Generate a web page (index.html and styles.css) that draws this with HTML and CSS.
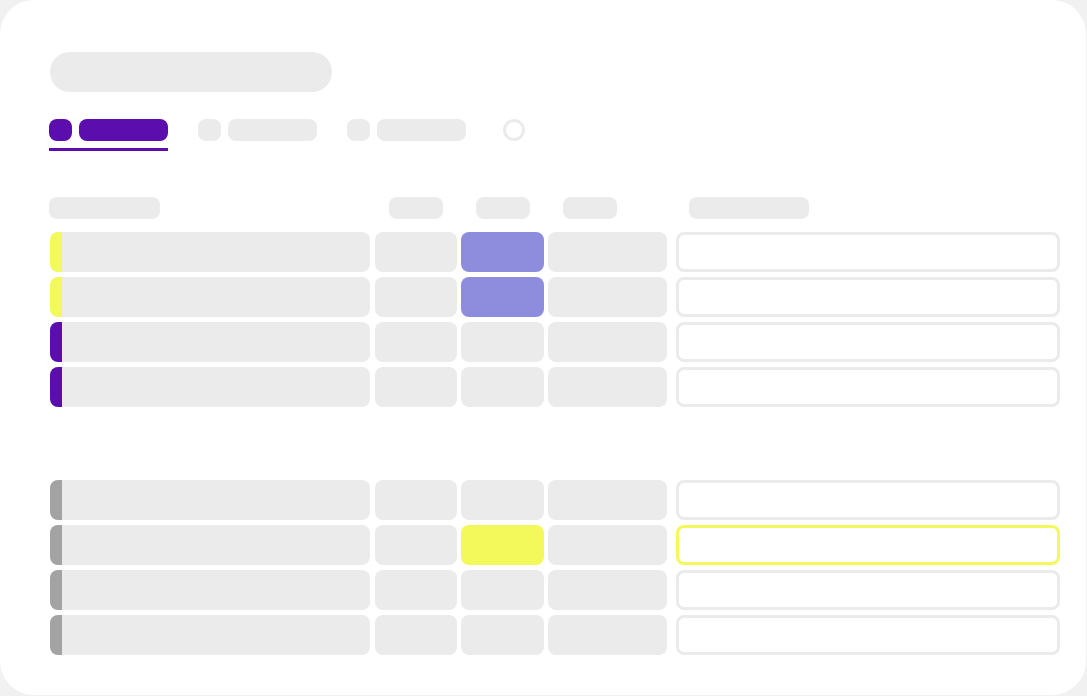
FILE: index.html
```html
<!DOCTYPE html>
<html lang="en">
<head>
<meta charset="utf-8">
<title>Skeleton table</title>
<link rel="stylesheet" href="styles.css">
</head>
<body>
<div class="card">
  <div class="title"></div>
  <div class="tabs">
    <div class="tab active"><span class="dot"></span><span class="bar"></span></div>
    <div class="tab"><span class="dot"></span><span class="bar"></span></div>
    <div class="tab"><span class="dot"></span><span class="bar"></span></div>
    <span class="ring"></span>
  </div>
  <div class="head">
    <span class="h h1"></span>
    <span class="cellh c2"><span class="h hs"></span></span>
    <span class="cellh c3"><span class="h hs"></span></span>
    <span class="cellh c4"><span class="h hs"></span></span>
    <span class="cellh c5"><span class="h hl"></span></span>
  </div>
  <div class="section">
    <div class="row"><span class="c c1 yellow"></span><span class="c c2"></span><span class="c c3 lav"></span><span class="c c4"></span><span class="c c5"></span></div>
    <div class="row"><span class="c c1 yellow"></span><span class="c c2"></span><span class="c c3 lav"></span><span class="c c4"></span><span class="c c5"></span></div>
    <div class="row"><span class="c c1 purple"></span><span class="c c2"></span><span class="c c3"></span><span class="c c4"></span><span class="c c5"></span></div>
    <div class="row"><span class="c c1 purple"></span><span class="c c2"></span><span class="c c3"></span><span class="c c4"></span><span class="c c5"></span></div>
  </div>
  <div class="section second">
    <div class="row"><span class="c c1 gray"></span><span class="c c2"></span><span class="c c3"></span><span class="c c4"></span><span class="c c5"></span></div>
    <div class="row"><span class="c c1 gray"></span><span class="c c2"></span><span class="c c3 ylw"></span><span class="c c4"></span><span class="c c5 ylw-border"></span></div>
    <div class="row"><span class="c c1 gray"></span><span class="c c2"></span><span class="c c3"></span><span class="c c4"></span><span class="c c5"></span></div>
    <div class="row"><span class="c c1 gray"></span><span class="c c2"></span><span class="c c3"></span><span class="c c4"></span><span class="c c5"></span></div>
  </div>
</div>
</body>
</html>
```
FILE: styles.css
```css
* { box-sizing: border-box; }
html, body { margin: 0; padding: 0; }
body {
  background: #f1f1f1;
  font-family: "Liberation Sans", Arial, sans-serif;
  width: 1087px;
  height: 696px;
  overflow: hidden;
}
.card {
  width: 1086px;
  height: 695px;
  background: #ffffff;
  border-radius: 34px;
  padding: 52px 25px 0 50px;
}
.title {
  width: 282px;
  height: 40px;
  border-radius: 20px;
  background: #ebebeb;
}
.tabs {
  display: flex;
  align-items: flex-start;
  gap: 30px;
  margin-top: 27px;
  margin-left: -1px;
  height: 32px;
}
.tab {
  display: flex;
  gap: 7px;
  height: 32px;
  width: 119px;
}
.tab .dot {
  width: 23px;
  height: 22px;
  border-radius: 8px;
  background: #ebebeb;
}
.tab .bar {
  width: 89px;
  height: 22px;
  border-radius: 8px;
  background: #ebebeb;
}
.tab.active { border-bottom: 3px solid #5c0dae; }
.tab.active .dot, .tab.active .bar { background: #5c0dae; }
.ring {
  margin-left: 7px;
  width: 22px;
  height: 22px;
  border-radius: 50%;
  border: 3px solid #ebebeb;
}
.head {
  display: flex;
  align-items: center;
  margin-top: 46px;
  height: 22px;
}
.h {
  display: block;
  height: 22px;
  border-radius: 8px;
  background: #ebebeb;
}
.h1 { width: 111px; margin-left: -1px; margin-right: 210px; }
.hs { width: 54px; }
.hl { width: 120px; }
.cellh { display: block; padding-left: 14px; }
.head .c2 { width: 82px; margin-left: 5px; }
.head .c3 { width: 83px; margin-left: 4px; padding-left: 15px; }
.head .c4 { width: 119px; margin-left: 4px; padding-left: 15px; }
.head .c5 { width: 384px; margin-left: 9px; padding-left: 13px; }
.section {
  display: flex;
  flex-direction: column;
  gap: 5px;
  margin-top: 13px;
}
.section.second { margin-top: 73px; }
.row {
  display: flex;
  height: 40px;
}
.c {
  display: block;
  height: 40px;
  border-radius: 8px;
  background: #ebebeb;
}
.row .c1 { width: 320px; border-left: 12px solid #ebebeb; }
.row .c2 { width: 82px; margin-left: 5px; }
.row .c3 { width: 83px; margin-left: 4px; }
.row .c4 { width: 119px; margin-left: 4px; }
.row .c5 {
  width: 384px;
  margin-left: 9px;
  background: #ffffff;
  border: 3px solid #ebebeb;
}
.c1.yellow { border-left-color: #f3f95b; }
.c1.purple { border-left-color: #5c0dae; }
.c1.gray { border-left-color: #a3a3a3; }
.c.lav { background: #8e8cdd; }
.c.ylw { background: #f3f95b; }
.row .c5.ylw-border { border-color: #f3f95b; }
```
